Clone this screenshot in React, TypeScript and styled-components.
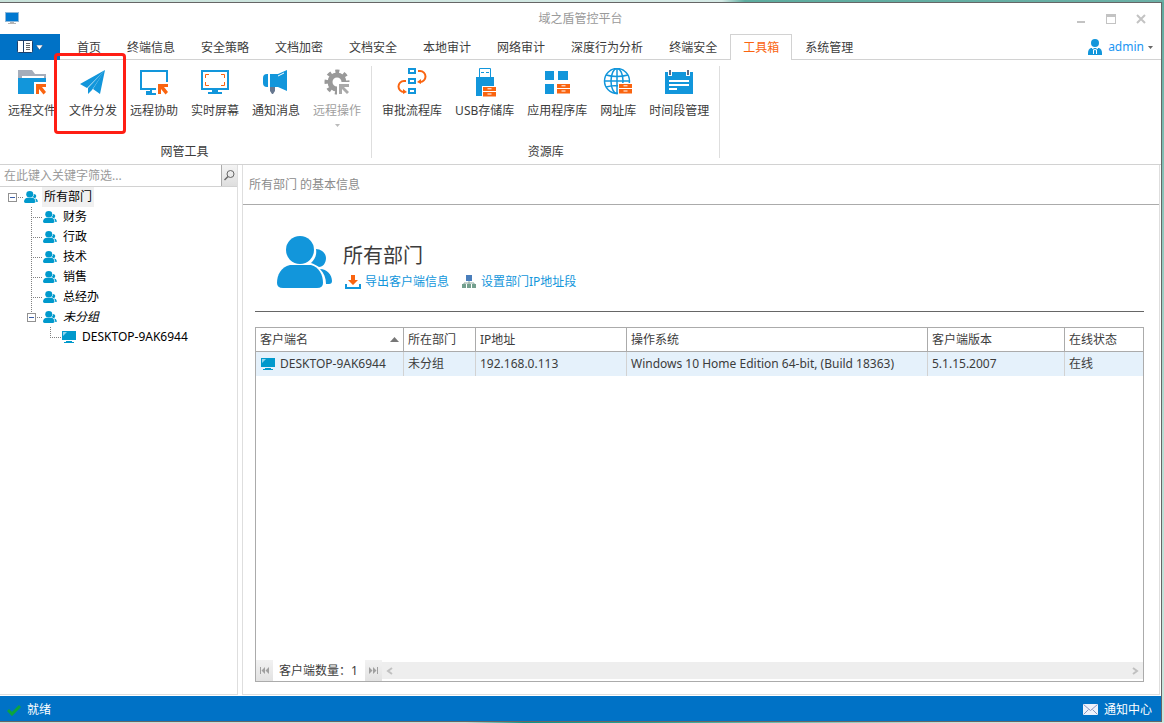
import React from "react";
import styled, { createGlobalStyle, css } from "styled-components";

const BLUE = "#1296db";
const ORANGE = "#fa6410";
const TREE_BLUE = "#0099cc";
const LINE = "#d2d2d2";

const GlobalStyle = createGlobalStyle`
  *, *::before, *::after { box-sizing: border-box; }
  body {
    margin: 0;
    font-family: "Noto Sans", "Noto Sans CJK SC", sans-serif;
    font-size: 12px;
    line-height: 20px;
    color: #3c3c3c;
  }
  button, input {
    font: inherit;
    color: inherit;
    background: none;
    border: 0;
    padding: 0;
    margin: 0;
    border-radius: 0;
  }
  button { cursor: pointer; white-space: nowrap; }
  svg { display: block; flex: none; }
  ul { list-style: none; margin: 0; padding: 0; }
  h1, h2 { margin: 0; font-weight: 400; }
`;

const Desktop = styled.div`
  min-height: 100vh;
  display: flex;
  padding: 2px 2px 1px 0;
  background:
    linear-gradient(90deg, #c8e2da 0, #d5eae6 62%, #5dac9f 64%, #6bb0a6 100%) top / 100% 2px no-repeat,
    linear-gradient(90deg, #c5dfd9 0, #c5dfd9 40%, #0b9488 45%, #2aa292 56%, #c5e2da 82%, #d0e8e2 100%) bottom / 100% 1px no-repeat,
    linear-gradient(180deg, #5fa99e 0, #8fc5bb 30%, #b7dcd2 60%, #cbe6de 100%);
`;

const Window = styled.div`
  flex: 1;
  min-width: 0;
  display: flex;
  flex-direction: column;
  background: #fff;
  border: 1px solid #666;
  border-left: 0;
`;

const TitleBar = styled.header`
  height: 31px;
  display: grid;
  grid-template-columns: 1fr auto 1fr;
  align-items: center;
  padding: 0 5px;
`;

const WindowTitle = styled.h1`
  font-size: 12px;
  color: #9a9a9a;
`;

const WindowButtons = styled.div`
  display: flex;
  justify-content: flex-end;
`;

const WindowButton = styled.button`
  width: 30px;
  height: 30px;
  display: grid;
  place-items: center;
`;

const TabBar = styled.nav`
  height: 26px;
  display: flex;
  box-shadow: inset 0 -1px ${LINE};
`;

const MenuButton = styled.button`
  width: 60px;
  display: flex;
  align-items: center;
  justify-content: center;
  gap: 3px;
  margin-right: 4px;
  background: #0072c6;
`;

const Tab = styled.button<{ $active?: boolean }>`
  padding: 0 12px;
  border: 1px solid transparent;
  border-bottom: 0;
  ${(p) =>
    p.$active &&
    css`
      color: ${ORANGE};
      background: #fff;
      border-color: ${LINE};
    `}
`;

const UserButton = styled.button`
  display: flex;
  align-items: center;
  gap: 6px;
  margin-left: auto;
  padding-right: 8px;
  color: #2196f3;
`;

const UserName = styled.span`
  display: flex;
  align-items: center;
  gap: 4px;
`;

const Ribbon = styled.section`
  height: 105px;
  display: flex;
  border-bottom: 1px solid ${LINE};
`;

const RibbonGroup = styled.div`
  display: flex;
  flex-direction: column;
  justify-content: space-between;
  margin: 6px 0;
  padding: 0 4px;
  border-right: 1px solid #dedede;

  &:first-child { padding-left: 2px; }
`;

const RibbonItems = styled.div`
  display: flex;
  gap: 1px;
`;

const RibbonButton = styled.button<{ $muted?: boolean }>`
  position: relative;
  height: 67px;
  padding: 2px 6px 0;
  display: flex;
  flex-direction: column;
  align-items: center;
  gap: 3px;
  color: ${(p) => (p.$muted ? "#a0a0a0" : "inherit")};
`;

const Highlight = styled.span`
  position: absolute;
  inset: -13px -3px -1px -9px;
  z-index: 1;
  border: 3px solid #ff1e14;
  border-radius: 4px;
`;

const GroupTitle = styled.div`
  text-align: center;
  line-height: 12px;
`;

const Main = styled.main`
  flex: 1;
  display: flex;
  gap: 4px;
  padding: 0 1px 1px 0;
`;

const SidePanel = styled.aside`
  width: 238px;
  flex: none;
  border: solid #dedede;
  border-width: 0 1px 1px 0;
`;

const SearchRow = styled.div`
  height: 22px;
  display: flex;
  border-bottom: 1px solid ${LINE};
`;

const SearchInput = styled.input`
  flex: 1;
  min-width: 0;
  padding: 0 4px;
  outline: 0;

  &::placeholder { color: #9a9a9a; opacity: 1; }
`;

const SearchButton = styled.button`
  width: 16px;
  display: grid;
  place-items: center;
  border-left: 1px solid #ababab;
  background: linear-gradient(#f4f4f4, #dedede);
`;

const Tree = styled.ul`
  padding-left: 8px;
`;

const SubTree = styled.ul`
  margin-left: 19px;
`;

const TreeRow = styled.div`
  height: 20px;
  display: flex;
  align-items: center;
  color: #000;
`;

const Joint = styled.span<{ $line: "none" | "full" | "half" }>`
  width: 16px;
  height: 20px;
  flex: none;
  display: flex;
  align-items: center;
  background-image:
    repeating-linear-gradient(90deg, #808080 0 1px, transparent 1px 2px),
    repeating-linear-gradient(180deg, #808080 0 1px, transparent 1px 2px);
  background-repeat: no-repeat;
  background-position: 4px 10px, 4px 0;
  background-size: 11px 1px, 1px ${(p) => ({ none: "0", full: "20px", half: "10px" })[p.$line]};
`;

const Toggle = styled.button`
  width: 9px;
  height: 9px;
  display: grid;
  place-items: center;
  border: 1px solid #919191;
  background: #fff;

  &::before {
    content: "";
    width: 5px;
    height: 1px;
    background: #3b5fa8;
  }
`;

const TreeLabel = styled.span<{ $selected?: boolean; $italic?: boolean }>`
  margin-left: 4px;
  padding: 0 2px;
  line-height: 20px;
  white-space: nowrap;
  background: ${(p) => (p.$selected ? "#f0f0f0" : "none")};
  font-style: ${(p) => (p.$italic ? "italic" : "normal")};
`;

const Content = styled.section`
  flex: 1;
  min-width: 0;
  display: flex;
  flex-direction: column;
  border: solid #dedede;
  border-width: 0 1px 1px;
`;

const ContentTitle = styled.div`
  height: 40px;
  padding: 0 6px;
  line-height: 40px;
  color: #8c8c8c;
  border-bottom: 1px solid #ababab;
`;

const ContentBody = styled.div`
  flex: 1;
  display: flex;
  flex-direction: column;
  padding: 0 15px 12px 12px;
`;

const Summary = styled.div`
  height: 107px;
  display: flex;
  gap: 10px;
  padding: 31px 22px 0;
  border-bottom: 1px solid #666;
`;

const SummaryText = styled.div`
  padding-top: 6px;
`;

const DepartmentName = styled.h2`
  font-size: 20px;
  line-height: 28px;
`;

const SummaryLinks = styled.div`
  display: flex;
  gap: 13px;
  padding-left: 2px;
`;

const SummaryLink = styled.a`
  display: flex;
  align-items: center;
  gap: 4px;
  line-height: 24px;
  color: ${BLUE};
  text-decoration: none;
  white-space: nowrap;
`;

const Grid = styled.div`
  flex: 1;
  display: flex;
  flex-direction: column;
  justify-content: space-between;
  margin-top: 15px;
  border: 1px solid #ababab;
`;

const Table = styled.table`
  width: 100%;
  table-layout: fixed;
  border-collapse: separate;
  border-spacing: 0;
`;

const HeadCell = styled.th`
  height: 24px;
  padding: 0 4px;
  font-weight: 400;
  text-align: left;
  border: solid #ababab;
  border-width: 0 1px 1px 0;

  &:last-child { border-right: 0; }
`;

const HeadContent = styled.span`
  display: flex;
  align-items: center;
  justify-content: space-between;
`;

const Cell = styled.td`
  height: 24px;
  padding: 0 4px;
  white-space: nowrap;
  background: #e5f1fb;
  border-right: 1px solid ${LINE};

  &:last-child { border-right: 0; }
`;

const ClientName = styled.span`
  display: flex;
  align-items: center;
  gap: 5px;
  padding-left: 1px;
`;

const GridFooter = styled.div`
  display: flex;
  align-items: center;
  height: 21px;
`;

const NavButton = styled.button`
  width: 17px;
  height: 21px;
  display: grid;
  place-items: center;
  background: linear-gradient(#f2f2f2, #e2e2e2);
`;

const ClientCount = styled.span`
  padding: 0 7px 0 6px;
  white-space: nowrap;
`;

const ScrollBar = styled.div`
  flex: 1;
  height: 17px;
  display: flex;
  justify-content: space-between;
  background: #eee;
`;

const ScrollArrow = styled.button`
  width: 15px;
  display: grid;
  place-items: center;
`;

const StatusBar = styled.footer`
  height: 25px;
  display: flex;
  align-items: center;
  justify-content: space-between;
  padding: 2px 9px 0 7px;
  color: #fff;
  background: #0072c6;
`;

const StatusItem = styled.span`
  display: flex;
  align-items: center;
  gap: 6px;
`;

const NoticeButton = styled.button`
  display: flex;
  align-items: center;
  gap: 6px;
`;

const Drawer = ({ x, y }: { x: number; y: number }) => (
  <g transform={`translate(${x} ${y})`}>
    <path d="M-1-1h15v12H-1z" fill="#fff" />
    <path d="M0 0h13v4H0zM0 5h13v4.500H0z" fill={ORANGE} />
    <path d="M4.500 1.800h4M4.500 7h4" stroke="#fff" />
  </g>
);

const Pointer = () => (
  <path d="M18 14h10v3h-4l4 5-2.500 2.500L21 19v5h-3z" fill={ORANGE} />
);

const Screen = () => (
  <path d="M1 1h26v18H1zM11 20v2H7v2h14v-2h-4v-2" fill="none" stroke={BLUE} strokeWidth="2" />
);

const drawings: Record<string, React.ReactNode> = {
  folder: (
    <>
      <path d="M0 0h14l3 4h11v8H0z" fill="#a5adba" />
      <path d="M4 6h22v3H4z" fill="#fff" />
      <path d="M0 8h28v16H0z" fill={BLUE} />
      <path d="M16 12h13v13H16z" fill="#fff" />
      <Pointer />
    </>
  ),
  plane: (
    <g fill={BLUE}>
      <path d="M26 0 1 14l7 4zM26 0 9 18v6l4-4zM26 0 14 19l7 5z" />
    </g>
  ),
  assist: (
    <>
      <Screen />
      <path d="M16 12h13v13H16z" fill="#fff" />
      <Pointer />
    </>
  ),
  screen: (
    <>
      <path d="M1 1h26v18H1z" fill="none" stroke={BLUE} strokeWidth="2" />
      <path d="M11 20h6v2h4v2H7v-2h4z" fill={BLUE} />
      <path d="M4.500 8V4.500H8M20 4.500h3.500V8M23.500 12v3.500H20M8 15.500H4.500V12" fill="none" stroke={ORANGE} />
    </>
  ),
  horn: (
    <>
      <path d="M8 17h5v4l-2 3h-1l-2-3z" fill="#66778f" />
      <path d="M5 4h1v13H5a4 4 0 0 1-4-4V8a4 4 0 0 1 4-4zM8 4h8l9-4v21l-9-4H8z" fill={BLUE} />
      <path d="M16 6l6-3" stroke="#fff" />
    </>
  ),
  gear: (
    <>
      <circle cx="14" cy="12" r="7" fill="none" stroke="#999" strokeWidth="5" />
      <circle cx="14" cy="12" r="10.500" fill="none" stroke="#999" strokeWidth="4" strokeDasharray="4 4.247" strokeDashoffset="2" />
      <path d="M14 12h13v14H14z" fill="#fff" />
      <path d="M16 14h10v3h-5l5 5-2 2-5-5v5h-3z" fill="#aaa" />
    </>
  ),
  flow: (
    <>
      <path d="M11-1h6v4h-6zM11 9h6v4h-6zM11 19h6v4h-6z" fill="none" stroke={BLUE} strokeWidth="2" />
      <path d="M20 1h2a5 5 0 0 1 0 11M8 11H6a5 5 0 0 0 0 11" fill="none" stroke={ORANGE} strokeWidth="2" />
      <path d="M19 12l4-3v5zM9 22l-4-3v5z" fill={ORANGE} />
    </>
  ),
  usb: (
    <>
      <path d="M8.500-1.500h11v9h-11z" fill="#fff" stroke={BLUE} />
      <path d="M10 2.500h3M15 2.500h3" stroke={BLUE} />
      <path d="M5 7h18v19H5z" fill={BLUE} />
      <Drawer x={12} y={17} />
    </>
  ),
  apps: (
    <>
      <path d="M2 1h9v9H2zM15 1h10v9H15zM2 14h9v10H2z" fill={BLUE} />
      <Drawer x={14} y={14} />
    </>
  ),
  globe: (
    <>
      <g fill="none" stroke={BLUE} strokeWidth="1.500">
        <circle cx="13" cy="11" r="12.500" />
        <ellipse cx="13" cy="11" rx="6" ry="12.500" />
        <path d="M13-2v26M0 11h26M2 5q11 3 22 0M2 17q11-3 22 0" />
      </g>
      <Drawer x={15} y={14} />
    </>
  ),
  calendar: (
    <>
      <path d="M0 2h3v4h4V2h14v4h4V2h3v22H0z" fill={BLUE} />
      <path d="M5 0v5M23 0v5" stroke="#5e6b84" strokeWidth="2" />
      <path d="M4 11h20M4 15h20M4 19h8" stroke="#fff" strokeWidth="2" />
    </>
  ),
};

const RibbonIcon = ({ name }: { name: string }) => (
  <svg width="30" height="30" viewBox="-1 -2 30 30" aria-hidden="true">
    {drawings[name]}
  </svg>
);

const DownArrow = ({ color = "#666" }: { color?: string }) => (
  <svg width="5" height="3" viewBox="0 0 5 3" aria-hidden="true">
    <path d="M0 0h5L2.500 3z" fill={color} />
  </svg>
);

const PeopleIcon = ({ width, height, color }: { width: number; height: number; color: string }) => (
  <svg width={width} height={height} viewBox="0 0 56 52" preserveAspectRatio="none" fill={color} aria-hidden="true">
    <circle cx="23" cy="14" r="14" />
    <path d="M13 29h21c8 2 12 10 12 18q0 5-6 5H6q-6 0-6-5c0-8 4-16 13-18z" />
    <path d="M39 13c5 0 10 4 10 9s-3 9-7 9c-3-2-5-3-8-4 4-4 6-8 5-14zM43 33c7 0 12 6 12 12q0 3-3 3h-3c0-6-2-11-6-15z" />
  </svg>
);

const ComputerIcon = () => (
  <svg width="14" height="13" viewBox="0 0 14 13" aria-hidden="true">
    <path d="M0 0h14v9H0zM4 10h6v1h2v1H2v-1h2z" fill={TREE_BLUE} />
    <path d="M1 5V1h4z" fill="#8fd6ee" />
  </svg>
);

const EndArrow = ({ flip }: { flip?: boolean }) => (
  <svg width="9" height="7" viewBox="0 0 9 7" aria-hidden="true">
    <path
      d="M0 0h1v7H0zM5 0v7L1.500 3.500zM9 0v7L5.500 3.500z"
      fill="#a0a0a0"
      transform={flip ? "matrix(-1 0 0 1 9 0)" : undefined}
    />
  </svg>
);

const Chevron = ({ right }: { right?: boolean }) => (
  <svg width="7" height="8" viewBox="0 0 7 8" fill="none" stroke="#c0c0c0" strokeWidth="2" aria-hidden="true">
    <path d={right ? "M1 1l4 3-4 3" : "M6 1L2 4l4 3"} />
  </svg>
);

const tabs = [
  "首页", "终端信息", "安全策略", "文档加密", "文档安全", "本地审计",
  "网络审计", "深度行为分析", "终端安全", "工具箱", "系统管理",
];

type Tool = { icon: string; label: string; marked?: boolean; muted?: boolean };

const groups: { title: string; tools: Tool[] }[] = [
  {
    title: "网管工具",
    tools: [
      { icon: "folder", label: "远程文件" },
      { icon: "plane", label: "文件分发", marked: true },
      { icon: "assist", label: "远程协助" },
      { icon: "screen", label: "实时屏幕" },
      { icon: "horn", label: "通知消息" },
      { icon: "gear", label: "远程操作", muted: true },
    ],
  },
  {
    title: "资源库",
    tools: [
      { icon: "flow", label: "审批流程库" },
      { icon: "usb", label: "USB存储库" },
      { icon: "apps", label: "应用程序库" },
      { icon: "globe", label: "网址库" },
      { icon: "calendar", label: "时间段管理" },
    ],
  },
];

const departments = ["财务", "行政", "技术", "销售", "总经办"];

const columns = [
  { title: "客户端名", width: 148, sorted: true },
  { title: "所在部门", width: 72 },
  { title: "IP地址", width: 151 },
  { title: "操作系统", width: 301 },
  { title: "客户端版本", width: 137 },
  { title: "在线状态" },
];

const SmallPeople = () => <PeopleIcon width={14} height={12} color={TREE_BLUE} />;

export default function App() {
  return (
    <Desktop>
      <GlobalStyle />
      <Window>
        <TitleBar>
          <svg width="14" height="13" viewBox="0 0 14 13" aria-hidden="true">
            <path d="M0 0h14v10H0z" fill="#8fb8d8" />
            <path d="M1 1h12v8H1z" fill="#0078d0" />
            <path d="M5 10h4v1h2v1H3v-1h2z" fill="#b4b4b4" />
          </svg>
          <WindowTitle>域之盾管控平台</WindowTitle>
          <WindowButtons>
            <WindowButton aria-label="最小化">
              <svg width="10" height="10" viewBox="0 0 10 10"><path d="M1 7h8v2H1z" fill="#c3c3c3" /></svg>
            </WindowButton>
            <WindowButton aria-label="最大化">
              <svg width="10" height="10" viewBox="0 0 10 10"><path d="M0 0h10v10H0zM1 3v6h8V3z" fillRule="evenodd" fill="#c3c3c3" /></svg>
            </WindowButton>
            <WindowButton aria-label="关闭">
              <svg width="10" height="10" viewBox="0 0 10 10"><path d="M1 1l8 8M9 1L1 9" stroke="#c3c3c3" strokeWidth="2" /></svg>
            </WindowButton>
          </WindowButtons>
        </TitleBar>

        <TabBar>
          <MenuButton aria-label="菜单">
            <svg width="16" height="14" viewBox="0 0 16 14" aria-hidden="true">
              <rect x="0.500" y="0.500" width="15" height="12" rx="1" fill="#fff" stroke="#1c3f6b" />
              <path d="M6.500 1v11" stroke="#1c3f6b" />
              <path d="M9 3.500h4M9 5.500h4M9 7.500h4M9 9.500h4" stroke="#666" />
            </svg>
            <svg width="7" height="5" viewBox="0 0 7 5" aria-hidden="true">
              <path d="M0 0h7L3.500 5z" fill="#fff" stroke="#1c3f6b" strokeWidth="0.500" />
            </svg>
          </MenuButton>
          {tabs.map((tab) => (
            <Tab key={tab} $active={tab === "工具箱"}>{tab}</Tab>
          ))}
          <UserButton>
            <svg width="14" height="16" viewBox="0 0 14 16" aria-hidden="true">
              <circle cx="7" cy="4" r="4" fill={BLUE} />
              <path d="M3 9h8q3 1 3 5v2H0v-2q0-4 3-5z" fill={BLUE} />
              <path d="M4 9l3 2 3-2M5.500 11v4M8.500 11v4" fill="none" stroke="#fff" />
            </svg>
            <UserName>admin <DownArrow /></UserName>
          </UserButton>
        </TabBar>

        <Ribbon>
          {groups.map((group) => (
            <RibbonGroup key={group.title}>
              <RibbonItems>
                {group.tools.map((tool) => (
                  <RibbonButton key={tool.label} $muted={tool.muted}>
                    <RibbonIcon name={tool.icon} />
                    {tool.label}
                    {tool.muted && <DownArrow color="#bbb" />}
                    {tool.marked && <Highlight />}
                  </RibbonButton>
                ))}
              </RibbonItems>
              <GroupTitle>{group.title}</GroupTitle>
            </RibbonGroup>
          ))}
        </Ribbon>

        <Main>
          <SidePanel>
            <SearchRow>
              <SearchInput aria-label="关键字筛选" placeholder="在此键入关键字筛选..." />
              <SearchButton aria-label="搜索">
                <svg width="11" height="11" viewBox="0 0 11 11" fill="none" stroke="#666" aria-hidden="true">
                  <circle cx="6.500" cy="4" r="3.500" />
                  <path d="M4 6.500L0.500 10" strokeWidth="1.500" />
                </svg>
              </SearchButton>
            </SearchRow>
            <Tree>
              <li>
                <TreeRow>
                  <Joint $line="none"><Toggle aria-label="折叠所有部门" /></Joint>
                  <SmallPeople />
                  <TreeLabel $selected>所有部门</TreeLabel>
                </TreeRow>
                <SubTree>
                  {departments.map((name) => (
                    <li key={name}>
                      <TreeRow>
                        <Joint $line="full" />
                        <SmallPeople />
                        <TreeLabel>{name}</TreeLabel>
                      </TreeRow>
                    </li>
                  ))}
                  <li>
                    <TreeRow>
                      <Joint $line="half"><Toggle aria-label="折叠未分组" /></Joint>
                      <SmallPeople />
                      <TreeLabel $italic>未分组</TreeLabel>
                    </TreeRow>
                    <SubTree>
                      <li>
                        <TreeRow>
                          <Joint $line="half" />
                          <ComputerIcon />
                          <TreeLabel>DESKTOP-9AK6944</TreeLabel>
                        </TreeRow>
                      </li>
                    </SubTree>
                  </li>
                </SubTree>
              </li>
            </Tree>
          </SidePanel>

          <Content>
            <ContentTitle>所有部门 的基本信息</ContentTitle>
            <ContentBody>
              <Summary>
                <PeopleIcon width={56} height={52} color={BLUE} />
                <SummaryText>
                  <DepartmentName>所有部门</DepartmentName>
                  <SummaryLinks>
                    <SummaryLink href="#export">
                      <svg width="16" height="14" viewBox="0 0 16 14" aria-hidden="true">
                        <path d="M6 0h4v5h3l-5 5-5-5h3z" fill={ORANGE} />
                        <path d="M1 9v4h14V9" fill="none" stroke={BLUE} strokeWidth="2" />
                      </svg>
                      导出客户端信息
                    </SummaryLink>
                    <SummaryLink href="#ip-range">
                      <svg width="15" height="14" viewBox="0 0 15 14" aria-hidden="true">
                        <path d="M4 0h6v6H4z" fill="#4a7ebb" />
                        <path d="M7 6v3M2 10V8h10v2" fill="none" stroke="#8aa79c" />
                        <path d="M0 9h4v4H0zM5 9h4v4H5zM10 9h4v4h-4z" fill="#74a08e" />
                      </svg>
                      设置部门IP地址段
                    </SummaryLink>
                  </SummaryLinks>
                </SummaryText>
              </Summary>

              <Grid>
                <Table>
                  <colgroup>
                    {columns.map((c) => <col key={c.title} width={c.width} />)}
                  </colgroup>
                  <thead>
                    <tr>
                      {columns.map((c) => (
                        <HeadCell key={c.title} scope="col">
                          <HeadContent>
                            {c.title}
                            {c.sorted && (
                              <svg width="9" height="5" viewBox="0 0 9 5" aria-hidden="true">
                                <path d="M0 5h9L4.500 0z" fill="#777" />
                              </svg>
                            )}
                          </HeadContent>
                        </HeadCell>
                      ))}
                    </tr>
                  </thead>
                  <tbody>
                    <tr>
                      <Cell><ClientName><ComputerIcon />DESKTOP-9AK6944</ClientName></Cell>
                      <Cell>未分组</Cell>
                      <Cell>192.168.0.113</Cell>
                      <Cell>Windows 10 Home Edition 64-bit, (Build 18363)</Cell>
                      <Cell>5.1.15.2007</Cell>
                      <Cell>在线</Cell>
                    </tr>
                  </tbody>
                </Table>
                <GridFooter>
                  <NavButton aria-label="第一条"><EndArrow /></NavButton>
                  <ClientCount>客户端数量：1</ClientCount>
                  <NavButton aria-label="最后一条"><EndArrow flip /></NavButton>
                  <ScrollBar>
                    <ScrollArrow aria-label="向左滚动"><Chevron /></ScrollArrow>
                    <ScrollArrow aria-label="向右滚动"><Chevron right /></ScrollArrow>
                  </ScrollBar>
                </GridFooter>
              </Grid>
            </ContentBody>
          </Content>
        </Main>

        <StatusBar>
          <StatusItem>
            <svg width="14" height="12" viewBox="0 0 14 12" aria-hidden="true">
              <path d="M1 6l4 4 8-8" fill="none" stroke="#0ca53c" strokeWidth="3" />
            </svg>
            就绪
          </StatusItem>
          <NoticeButton>
            <svg width="15" height="11" viewBox="0 0 15 11" aria-hidden="true">
              <path d="M0 0h15v11H0z" fill="#eef2fb" />
              <path d="M0.500 0.500l7 6 7-6M0.500 10.500l5-5M14.500 10.500l-5-5" fill="none" stroke="#8a98c0" />
            </svg>
            通知中心
          </NoticeButton>
        </StatusBar>
      </Window>
    </Desktop>
  );
}
